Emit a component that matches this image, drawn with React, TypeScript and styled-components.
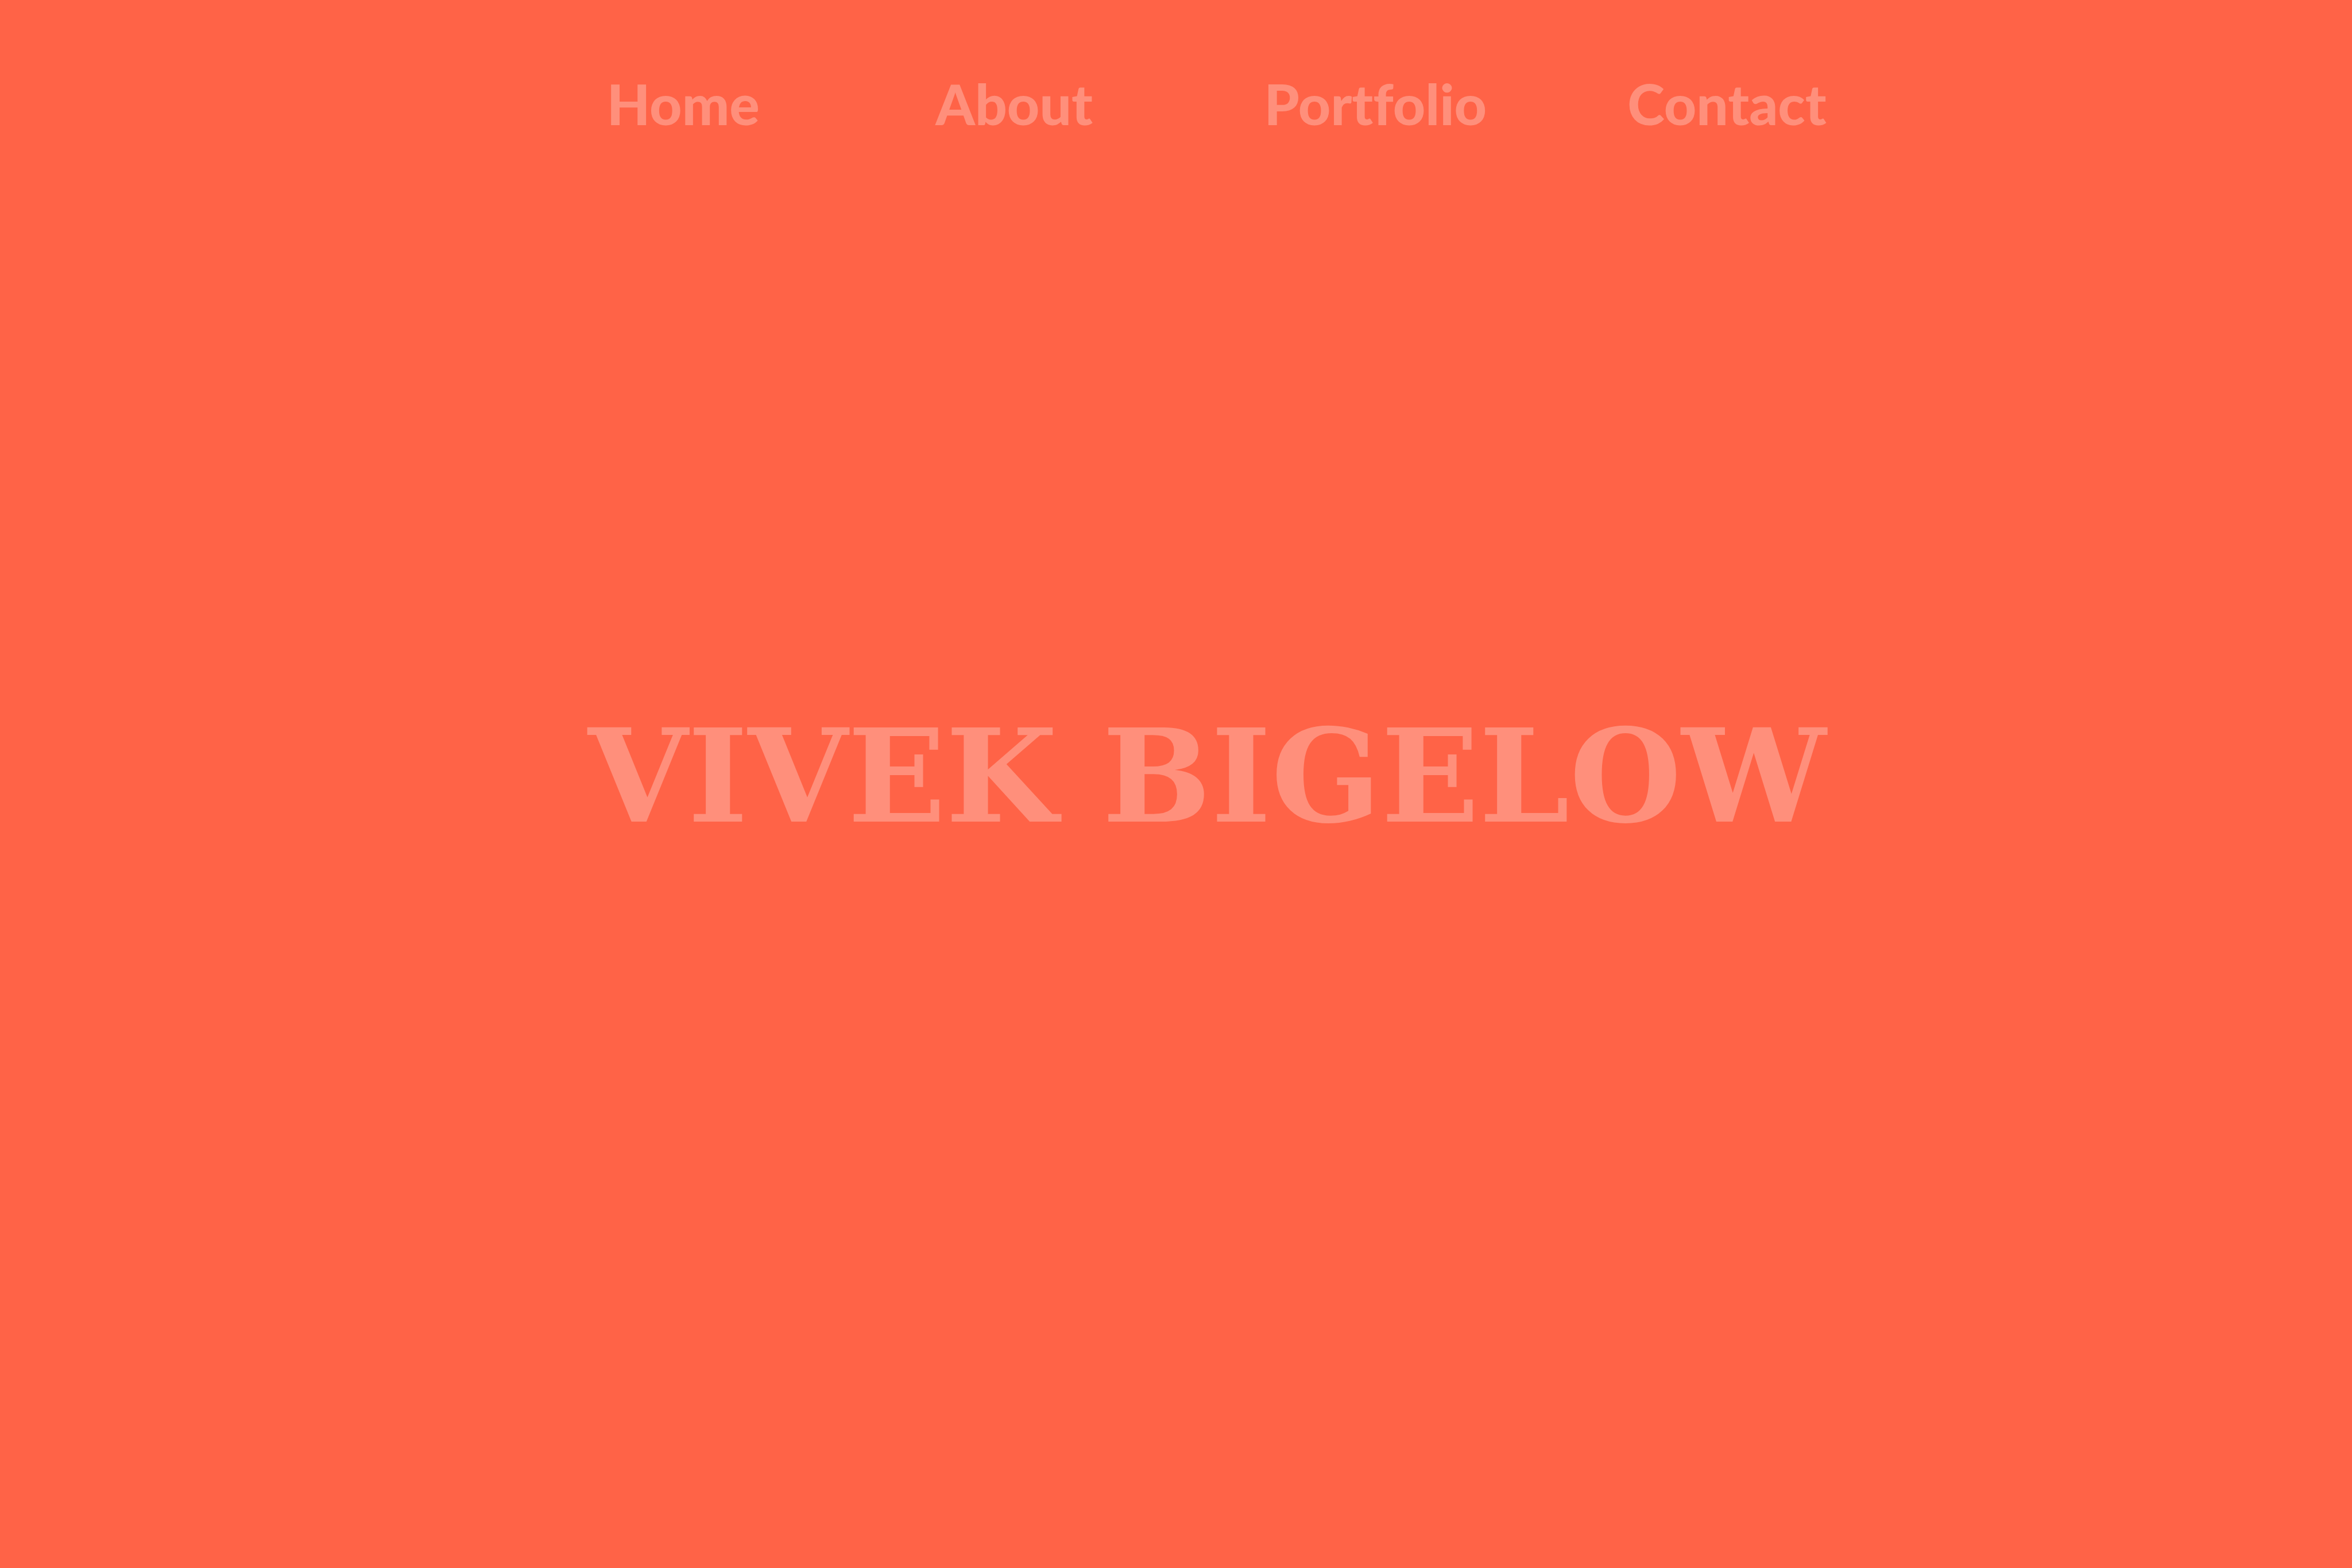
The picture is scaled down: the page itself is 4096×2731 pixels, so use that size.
import React from 'react';
import styled, { createGlobalStyle } from 'styled-components';

const GlobalStyle = createGlobalStyle`
  body { margin: 0; background: #ff6347; }
`;

const Page = styled.div`
  min-height: 100vh;
  display: flex;
  flex-direction: column;
  background: #ff6347;
  color: #ff8f7b;
`;

const Nav = styled.nav`
  display: grid;
  grid-template-columns: 57fr 57fr 63fr 40fr;
  padding: 120px 21% 0 25.8%;
`;

const NavLink = styled.a`
  font: 900 98px/120px 'Century Gothic', Lato, sans-serif;
  font-variant-ligatures: none;
  color: inherit;
  text-decoration: none;
`;

const Hero = styled.main`
  flex: 1;
  display: flex;
  align-items: center;
  justify-content: center;
  padding: 0 0 266px 108px;
`;

const Name = styled.h1`
  margin: 0;
  font: 700 224px/288px 'DejaVu Serif', serif;
  white-space: nowrap;
`;

const links = ['Home', 'About', 'Portfolio', 'Contact'];

export default function App() {
  return (
    <Page>
      <GlobalStyle />
      <Nav>
        {links.map((label) => (
          <NavLink key={label} href={`#${label.toLowerCase()}`}>{label}</NavLink>
        ))}
      </Nav>
      <Hero>
        <Name>VIVEK BIGELOW</Name>
      </Hero>
    </Page>
  );
}
